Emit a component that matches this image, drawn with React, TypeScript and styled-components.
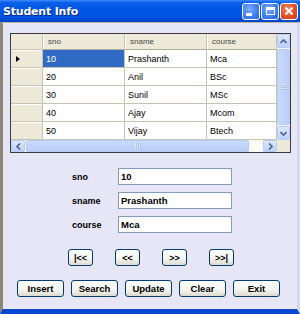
import React, { FC } from 'react';
import styled, { createGlobalStyle } from 'styled-components';

interface Student {
  sno: string;
  sname: string;
  course: string;
}

const students: Student[] = [
  { sno: '10', sname: 'Prashanth', course: 'Mca' },
  { sno: '20', sname: 'Anil', course: 'BSc' },
  { sno: '30', sname: 'Sunil', course: 'MSc' },
  { sno: '40', sname: 'Ajay', course: 'Mcom' },
  { sno: '50', sname: 'Vijay', course: 'Btech' },
];

const columns = ['sno', 'sname', 'course'];

const GlobalStyle = createGlobalStyle`
  html, body {
    margin: 0;
    padding: 0;
    background: #ffffff;
  }
  body {
    width: 300px;
    height: 314px;
    overflow: hidden;
    font-family: 'Liberation Sans', Arial, sans-serif;
  }
`;

const Arrow = ({ dir }: { dir: 'up' | 'down' | 'left' | 'right' }): JSX.Element => {
  const rot = { up: 0, right: 90, down: 180, left: 270 }[dir];
  return (
    <svg width="7" height="5" viewBox="0 0 7 5" style={{ transform: `rotate(${rot}deg)` }}>
      <path d="M0.5 4 L3.5 1 L6.5 4" fill="none" stroke="#4d6185" strokeWidth="1.6" />
    </svg>
  );
};

const App: FC = () => {
  const current = students[0];

  return (
    <>
      <GlobalStyle />
      <Window>
        <TitleBar>
          <Title>Student Info</Title>
          <Controls>
            <CtrlButton>
              <MinGlyph />
            </CtrlButton>
            <CtrlButton>
              <MaxGlyph />
            </CtrlButton>
            <CtrlButton close>
              <svg width="10" height="10" viewBox="0 0 10 10">
                <path d="M1.5 1.5 L8.5 8.5 M8.5 1.5 L1.5 8.5" stroke="#fff" strokeWidth="1.8" />
              </svg>
            </CtrlButton>
          </Controls>
        </TitleBar>
        <Body>
          <GridFrame>
            <GridTop>
              <Table>
                <CornerCell />
                {columns.map((c) => (
                  <HeaderCell key={c}>{c}</HeaderCell>
                ))}
                {students.map((s, i) => (
                  <React.Fragment key={s.sno}>
                    <RowHead>{i === 0 && <Pointer />}</RowHead>
                    <Cell selected={i === 0}>{s.sno}</Cell>
                    <Cell>{s.sname}</Cell>
                    <Cell>{s.course}</Cell>
                  </React.Fragment>
                ))}
              </Table>
              <VScroll>
                <ScrollBtn>
                  <Arrow dir="up" />
                </ScrollBtn>
                <VThumb>
                  <Grip vertical />
                </VThumb>
                <ScrollBtn>
                  <Arrow dir="down" />
                </ScrollBtn>
              </VScroll>
            </GridTop>
            <HScrollRow>
              <HScroll>
                <ScrollBtn>
                  <Arrow dir="left" />
                </ScrollBtn>
                <HThumb>
                  <Grip />
                </HThumb>
                <Track />
                <ScrollBtn>
                  <Arrow dir="right" />
                </ScrollBtn>
              </HScroll>
              <ScrollCorner />
            </HScrollRow>
          </GridFrame>

          <Form>
            <Field>
              <Label>sno</Label>
              <Input>{current.sno}</Input>
            </Field>
            <Field>
              <Label>sname</Label>
              <Input>{current.sname}</Input>
            </Field>
            <Field>
              <Label>course</Label>
              <Input>{current.course}</Input>
            </Field>
          </Form>

          <NavRow>
            <NavButton>|&lt;&lt;</NavButton>
            <NavButton>&lt;&lt;</NavButton>
            <NavButton>&gt;&gt;</NavButton>
            <NavButton>&gt;&gt;|</NavButton>
          </NavRow>

          <ActionRow>
            <ActionButton>Insert</ActionButton>
            <ActionButton>Search</ActionButton>
            <ActionButton>Update</ActionButton>
            <ActionButton>Clear</ActionButton>
            <ActionButton>Exit</ActionButton>
          </ActionRow>
        </Body>
      </Window>
    </>
  );
};

const Window = styled.div`
  width: 300px;
  height: 314px;
  display: flex;
  flex-direction: column;
`;
const TitleBar = styled.div`
  height: 22px;
  flex: 0 0 22px;
  display: flex;
  align-items: center;
  justify-content: space-between;
  padding: 0 2px 0 3px;
  box-sizing: border-box;
  background: linear-gradient(
    #3a8cff 0%,
    #0a5fe8 12%,
    #0055e5 45%,
    #0052e0 80%,
    #0042c4 100%
  );
`;
const Title = styled.span`
  color: #ffffff;
  font-family: 'DejaVu Sans', sans-serif;
  font-weight: bold;
  font-size: 11px;
  letter-spacing: -0.2px;
  text-shadow: 1px 1px 0 #0a2a80;
`;
const Controls = styled.div`
  display: flex;
  gap: 1px;
`;
const CtrlButton = styled.div<{ close?: boolean }>`
  width: 18px;
  height: 17px;
  box-sizing: border-box;
  border: 1px solid #ffffff;
  border-radius: 3px;
  display: flex;
  align-items: center;
  justify-content: center;
  position: relative;
  background: ${({ close }): string =>
    close
      ? 'radial-gradient(circle at 40% 35%, #f08a64 0%, #e0502a 55%, #c63a16 100%)'
      : 'radial-gradient(circle at 40% 35%, #7fb0ff 0%, #3f7ff0 55%, #2a62d8 100%)'};
`;
const MinGlyph = styled.div`
  width: 6px;
  height: 3px;
  background: #ffffff;
  margin-top: 7px;
  margin-right: 4px;
`;
const MaxGlyph = styled.div`
  width: 9px;
  height: 8px;
  box-sizing: border-box;
  border: 1px solid #ffffff;
  border-top-width: 3px;
`;
const Body = styled.div`
  flex: 1;
  background: #e6e6f6;
  border-left: 3px solid #8c8677;
  border-right: 3px solid #d6d6ec;
  border-bottom: 5px solid #0a48d0;
  border-top: 1px solid #b8b4a8;
  display: flex;
  flex-direction: column;
`;
const GridFrame = styled.div`
  margin: 10px 0 0 7px;
  width: 281px;
  box-sizing: border-box;
  border: 1px solid #3c3c3c;
  background: #ffffff;
  display: flex;
  flex-direction: column;
`;
const GridTop = styled.div`
  display: flex;
`;
const Table = styled.div`
  display: grid;
  grid-template-columns: 32px 82px 82px 70px;
  grid-template-rows: 16px repeat(5, 18px);
`;
const CornerCell = styled.div`
  background: #ece9d8;
  border-right: 1px solid #c8c4b4;
  border-bottom: 1px solid #c8c4b4;
`;
const HeaderCell = styled.div`
  background: #ece9d8;
  border-right: 1px solid #c8c4b4;
  border-bottom: 1px solid #b0ac9c;
  box-shadow: inset 1px 0 0 #ffffff;
  color: #4a4a4a;
  font-size: 8px;
  display: flex;
  align-items: center;
  padding-left: 5px;
`;
const RowHead = styled.div`
  background: #ece9d8;
  border-right: 1px solid #c8c4b4;
  border-bottom: 1px solid #c8c4b4;
  box-shadow: inset 0 1px 0 #ffffff;
  display: flex;
  align-items: center;
  padding-left: 5px;
`;
const Pointer = styled.div`
  width: 0;
  height: 0;
  border-top: 3.5px solid transparent;
  border-bottom: 3.5px solid transparent;
  border-left: 4px solid #000000;
`;
const Cell = styled.div<{ selected?: boolean }>`
  background: ${({ selected }): string => (selected ? '#316ac5' : '#ffffff')};
  color: ${({ selected }): string => (selected ? '#ffffff' : '#000000')};
  border-right: 1px solid #c8c4b4;
  border-bottom: 1px solid #c8c4b4;
  font-size: 9px;
  display: flex;
  align-items: center;
  padding-left: 3px;
`;
const VScroll = styled.div`
  width: 13px;
  display: flex;
  flex-direction: column;
  background: #f4f3ee;
`;
const ScrollBtn = styled.div`
  flex: 0 0 auto;
  width: 13px;
  height: 14px;
  box-sizing: border-box;
  border: 1px solid #b6cbf6;
  border-radius: 2px;
  background: linear-gradient(#dde8fe, #bdd0fa);
  display: flex;
  align-items: center;
  justify-content: center;
`;
const VThumb = styled.div`
  flex: 1;
  margin: 1px 0;
  border: 1px solid #b6cbf6;
  border-radius: 2px;
  background: linear-gradient(90deg, #c9dafc, #b8cdf8);
  display: flex;
  align-items: center;
  justify-content: center;
`;
const Grip = styled.div<{ vertical?: boolean }>`
  width: ${({ vertical }): string => (vertical ? '6px' : '6px')};
  height: ${({ vertical }): string => (vertical ? '6px' : '6px')};
  background: ${({ vertical }): string =>
    vertical
      ? 'repeating-linear-gradient(#e8f0ff 0 1px, #9fb8e8 1px 2px)'
      : 'repeating-linear-gradient(90deg, #e8f0ff 0 1px, #9fb8e8 1px 2px)'};
  opacity: 0.7;
`;
const HScrollRow = styled.div`
  display: flex;
  height: 12px;
`;
const HScroll = styled.div`
  flex: 1;
  display: flex;
  background: #f4f3ee;
  & > ${ScrollBtn} {
    width: 14px;
    height: 12px;
  }
`;
const HThumb = styled.div`
  width: 221px;
  margin: 0 1px;
  border: 1px solid #b6cbf6;
  border-radius: 2px;
  background: linear-gradient(#c9dafc, #b8cdf8);
  display: flex;
  align-items: center;
  justify-content: center;
`;
const Track = styled.div`
  flex: 1;
  background: #fafaf6;
`;
const ScrollCorner = styled.div`
  width: 13px;
  background: #ece9d8;
`;
const Form = styled.div`
  margin: 15px 0 0 69px;
  display: flex;
  flex-direction: column;
  gap: 7px;
`;
const Field = styled.div`
  display: flex;
  align-items: center;
`;
const Label = styled.span`
  width: 46px;
  font-size: 9px;
  font-weight: bold;
  color: #000000;
`;
const Input = styled.div`
  width: 114px;
  height: 17px;
  box-sizing: border-box;
  border: 1px solid #7f9db9;
  background: #ffffff;
  font-size: 9.5px;
  font-weight: bold;
  display: flex;
  align-items: center;
  padding-left: 2px;
`;
const ButtonBase = styled.div`
  height: 17px;
  box-sizing: border-box;
  border: 1px solid #003c74;
  border-radius: 3px;
  background: linear-gradient(#ffffff 0%, #f4f4ef 60%, #dcdad0 100%);
  font-size: 9.5px;
  font-weight: bold;
  color: #000000;
  display: flex;
  align-items: center;
  justify-content: center;
`;
const NavRow = styled.div`
  margin: 16px 0 0 65px;
  display: flex;
  gap: 22px;
`;
const NavButton = styled(ButtonBase)`
  width: 25px;
  font-size: 9px;
`;
const ActionRow = styled.div`
  margin: 14px 0 0 14px;
  display: flex;
  gap: 7px;
`;
const ActionButton = styled(ButtonBase)`
  width: 47px;
`;

export default App;
